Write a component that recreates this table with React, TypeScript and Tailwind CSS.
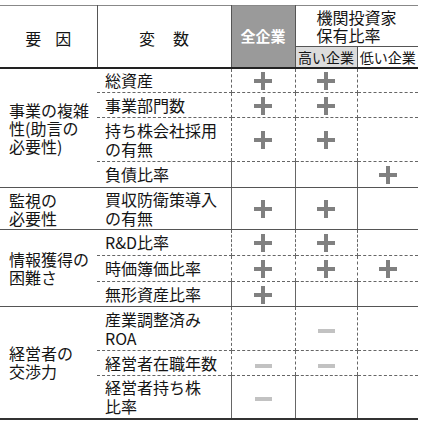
type Mark = "+" | "-" | "";

interface Row {
  v: string[];
  h: number;
  c: [Mark, Mark, Mark];
}

interface Group {
  label: string[];
  rows: Row[];
}

const groups: Group[] = [
  {
    label: ["事業の複雑", "性(助言の", "必要性)"],
    rows: [
      { v: ["総資産"], h: 25, c: ["+", "+", ""] },
      { v: ["事業部門数"], h: 25, c: ["+", "+", ""] },
      { v: ["持ち株会社採用", "の有無"], h: 44, c: ["+", "+", ""] },
      { v: ["負債比率"], h: 26, c: ["", "", "+"] },
    ],
  },
  {
    label: ["監視の", "必要性"],
    rows: [{ v: ["買収防衛策導入", "の有無"], h: 42, c: ["+", "+", ""] }],
  },
  {
    label: ["情報獲得の", "困難さ"],
    rows: [
      { v: ["R&D比率"], h: 26, c: ["+", "+", ""] },
      { v: ["時価簿価比率"], h: 26, c: ["+", "+", "+"] },
      { v: ["無形資産比率"], h: 25, c: ["+", "", ""] },
    ],
  },
  {
    label: ["経営者の", "交渉力"],
    rows: [
      { v: ["産業調整済み", "ROA"], h: 44, c: ["", "-", ""] },
      { v: ["経営者在職年数"], h: 25, c: ["-", "-", ""] },
      { v: ["経営者持ち株", "比率"], h: 43, c: ["-", "", ""] },
    ],
  },
];

function Plus() {
  return (
    <svg width="18" height="18" viewBox="0 0 18 18" className="inline-block">
      <path d="M7 0h4v7h7v4h-7v7h-4v-7h-7v-4h7z" fill="#808080" />
    </svg>
  );
}

function Minus() {
  return <span className="inline-block h-[4px] w-[17px] bg-[#c2c2c2] align-middle" />;
}

function MarkCell({ m, last, end, right }: { m: Mark; last: boolean; end: boolean; right: boolean }) {
  const bottom = end
    ? last
      ? "border-b-2 border-b-[#333]"
      : "border-b border-b-[#555]"
    : "border-b border-dashed border-b-[#666]";
  return (
    <td className={`p-0 text-center align-middle leading-none ${bottom} ${right ? "border-r border-r-[#666]" : ""}`}>
      {m === "+" ? <Plus /> : m === "-" ? <Minus /> : null}
    </td>
  );
}

export default function App() {
  return (
    <div
      className="h-[427px] w-[424px] bg-white pt-[5px] text-[#151515]"
      style={{ fontFamily: '"Noto Sans CJK JP", "Noto Sans", sans-serif' }}
    >
      <table className="w-[418px] table-fixed border-collapse">
        <colgroup>
          <col className="w-[97px]" />
          <col className="w-[134px]" />
          <col className="w-[64px]" />
          <col className="w-[62px]" />
          <col className="w-[61px]" />
        </colgroup>
        <thead>
          <tr className="h-[41px]">
            <th
              rowSpan={2}
              className="border-t border-b-2 border-r border-t-[#888] border-b-[#222] border-r-[#555] p-0 align-middle text-[16px] font-normal"
            >
              <div className="flex justify-center gap-[14px] pt-[3px]">
                <span>要</span>
                <span>因</span>
              </div>
            </th>
            <th
              rowSpan={2}
              className="border-t border-b-2 border-r border-t-[#888] border-b-[#222] border-r-[#555] p-0 align-middle text-[16px] font-normal"
            >
              <div className="flex justify-center gap-[18px] pt-[3px]">
                <span>変</span>
                <span>数</span>
              </div>
            </th>
            <th
              rowSpan={2}
              className="border-t border-b-2 border-r border-t-[#888] border-b-[#222] border-r-[#555] bg-[#9a9a9a] p-0 align-middle text-[15px] font-bold text-white"
            >
              全企業
            </th>
            <th colSpan={2} className="border-t border-t-[#888] p-0 text-left align-middle font-normal">
              <div className="pl-[21px] text-[16px] leading-[18px]">
                <div>機関投資家</div>
                <div>保有比率</div>
              </div>
            </th>
          </tr>
          <tr className="h-[21px]">
            <th className="border-t border-b-2 border-r border-t-[#555] border-b-[#222] border-r-[#555] bg-[#dcdcdc] p-0 text-[14px] font-normal leading-none">
              高い企業
            </th>
            <th className="border-t border-b-2 border-t-[#555] border-b-[#222] p-0 text-[14px] font-normal leading-none">
              低い企業
            </th>
          </tr>
        </thead>
        <tbody>
          {groups.map((g, gi) =>
            g.rows.map((r, ri) => {
              const end = ri === g.rows.length - 1;
              const last = gi === groups.length - 1;
              const bottom = end
                ? last
                  ? "border-b-2 border-b-[#333]"
                  : "border-b border-b-[#555]"
                : "border-b border-dashed border-b-[#666]";
              return (
                <tr key={`${gi}-${ri}`} style={{ height: r.h }}>
                  {ri === 0 && (
                    <td
                      rowSpan={g.rows.length}
                      className={`p-0 pl-[9px] align-middle text-[16px] leading-[18px] ${
                        last ? "border-b-2 border-b-[#333]" : "border-b border-b-[#555]"
                      }`}
                    >
                      {g.label.map((l) => (
                        <div key={l}>{l}</div>
                      ))}
                    </td>
                  )}
                  <td className={`border-r border-r-[#666] p-0 pl-[8px] align-middle text-[16px] leading-[19px] ${bottom}`}>
                    {r.v.map((l) => (
                      <div key={l} className="whitespace-nowrap">
                        {l}
                      </div>
                    ))}
                  </td>
                  <MarkCell m={r.c[0]} last={last} end={end} right />
                  <MarkCell m={r.c[1]} last={last} end={end} right />
                  <MarkCell m={r.c[2]} last={last} end={end} right={false} />
                </tr>
              );
            })
          )}
        </tbody>
      </table>
    </div>
  );
}
